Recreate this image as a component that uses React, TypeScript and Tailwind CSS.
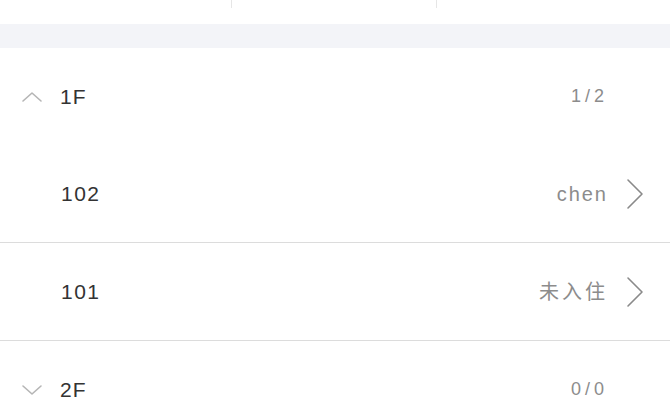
import React from 'react';

type Room = { no: string; tenant: string };
type Floor = { name: string; open: boolean; count: string; rooms: Room[] };

const FLOORS: Floor[] = [
  {
    name: '1F',
    open: true,
    count: '1/2',
    rooms: [
      { no: '102', tenant: 'chen' },
      { no: '101', tenant: '未入住' },
    ],
  },
  { name: '2F', open: false, count: '0/0', rooms: [] },
];

function Chevron({ up }: { up: boolean }) {
  return (
    <svg width="22" height="12" viewBox="0 0 22 12" className="shrink-0">
      <path
        d={up ? 'M2 10 L11 2 L20 10' : 'M2 2 L11 10 L20 2'}
        fill="none"
        stroke="#b5b5b5"
        strokeWidth="1.6"
        strokeLinecap="round"
        strokeLinejoin="round"
      />
    </svg>
  );
}

function Arrow() {
  return (
    <svg width="18" height="32" viewBox="0 0 18 32" className="shrink-0">
      <path d="M2 2 L16 16 L2 30" fill="none" stroke="#8a8a8a" strokeWidth="1.6" strokeLinecap="round" strokeLinejoin="round" />
    </svg>
  );
}

export default function App(): React.ReactElement {
  return (
    <div className="w-[670px] h-[415px] overflow-hidden bg-white" style={{ fontFamily: '"Liberation Sans", "Noto Sans CJK SC", sans-serif' }}>
      <div className="h-[24px] flex">
        <div className="w-[232px] h-[8px] border-r border-[#e6e6e6]" />
        <div className="w-[205px] h-[8px] border-r border-[#e6e6e6]" />
      </div>
      <div className="h-[24px] bg-[#f3f4f8]" />

      {FLOORS.map((f) => (
        <div key={f.name}>
          <div className={f.open ? 'h-[97px] flex items-center pl-[21px] pr-[62px]' : 'h-[98px] flex items-center pl-[21px] pr-[62px] border-b border-[#e2e2e2]'}>
            <Chevron up={f.open} />
            <span className="ml-[17px] text-[21px] text-[#333] tracking-[1px]">{f.name}</span>
            <span className="ml-auto text-[18px] text-[#8c8c8c] tracking-[4px]">{f.count}</span>
          </div>
          {f.open &&
            f.rooms.map((r) => (
              <div key={r.no} className="h-[98px] flex items-center pl-[61px] pr-[26px] border-b border-[#dcdcdc]">
                <span className="text-[21px] text-[#333] tracking-[1.5px]">{r.no}</span>
                <span className={r.tenant === 'chen' ? 'ml-auto text-[20px] text-[#8c8c8c] tracking-[2px]' : 'ml-auto text-[20px] text-[#8c8c8c] tracking-[3px]'}>{r.tenant}</span>
                <span className="ml-[18px]">
                  <Arrow />
                </span>
              </div>
            ))}
        </div>
      ))}
    </div>
  );
}
